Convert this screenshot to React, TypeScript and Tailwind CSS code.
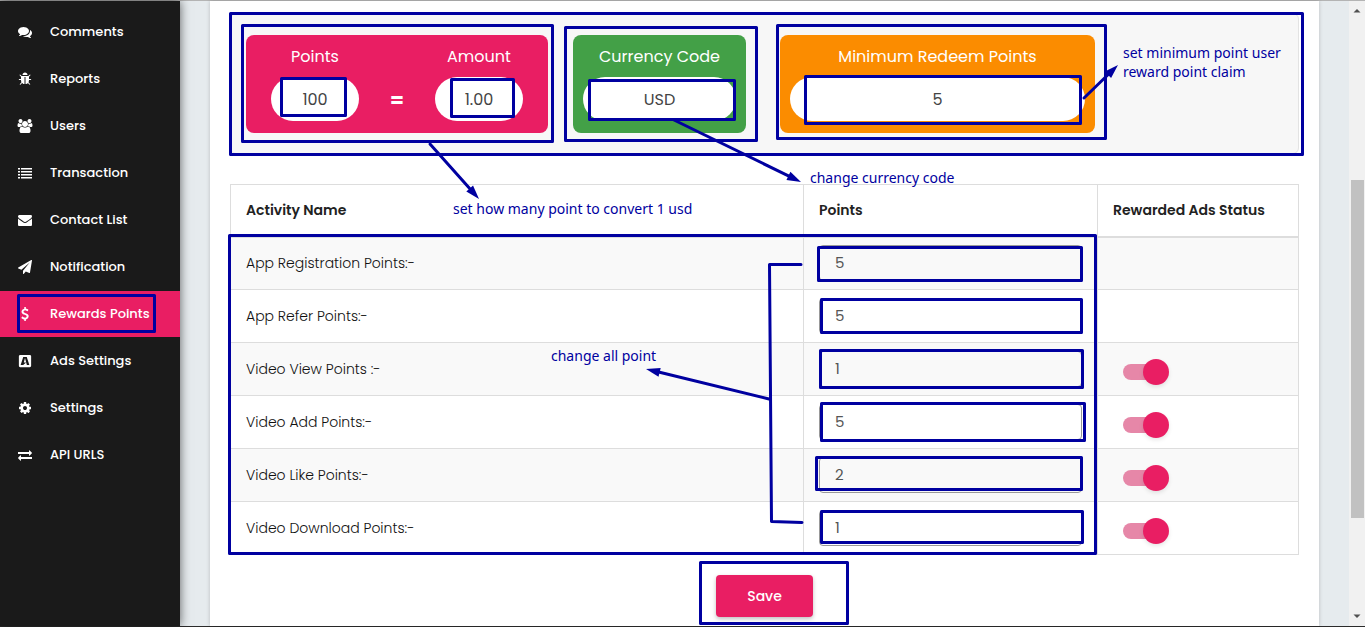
import type { ReactNode } from "react";
import { FaBuysellads } from "react-icons/fa";

const icons = {
  comments:
    "M1408 768q0 139-94 257t-256.5 186.5-353.5 68.5q-86 0-176-16-124 88-278 128-36 9-86 16h-3q-11 0-20.5-8t-11.5-21q-1-3-1-6.5t.5-6.5 2-6l2.5-5 3.5-5.5 4-5 4.5-5 4-4.5q5-6 23-25t26-29.5 22.5-29 25-38.5 20.5-44q-124-72-195-177t-71-224q0-139 94-257t256.5-186.5 353.5-68.5 353.5 68.5 256.5 186.5 94 257zm384 256q0 120-71 224.5t-195 176.5q10 24 20.5 44t25 38.5 22.5 29 26 29.5 23 25q1 1 4 4.5t4.5 5 4 5 3.5 5.5l2.5 5 2 6 .5 6.5-1 6.5q-3 14-13 22t-22 7q-50-7-86-16-154-40-278-128-90 16-176 16-271 0-472-132 58 4 88 4 161 0 309-45t264-129q125-92 192-212t67-254q0-77-23-152 129 71 204 178t75 230z",
  bug: "M1696 960q0 26-19 45t-45 19h-224q0 171-67 290l208 209q19 19 19 45t-19 45q-18 19-45 19t-45-19l-198-197q-5 5-15 13t-42 28.5-65 36.5-82 29-97 13v-896h-128v896q-51 0-101.5-13.5t-87-33-66-39-43.5-32.5l-15-14-183 207q-20 21-48 21-24 0-43-16-19-18-20.5-44.5t15.5-46.5l202-227q-58-114-58-274h-224q-26 0-45-19t-19-45 19-45 45-19h224v-294l-173-173q-19-19-19-45t19-45 45-19 45 19l173 173h844l173-173q19-19 45-19t45 19 19 45-19 45l-173 173v294h224q26 0 45 19t19 45zm-480-576h-640q0-133 93.5-226.5t226.5-93.5 226.5 93.5 93.5 226.5z",
  users:
    "M657 896q-162 5-265 128h-134q-82 0-138-40.5t-56-118.5q0-353 124-353 6 0 43.5 21t97.5 42.5 119 21.5q67 0 133-23-5 37-5 66 0 139 81 256zm1071 637q0 120-73 189.5t-194 69.5h-874q-121 0-194-69.5t-73-189.5q0-53 3.5-103.5t14-109 26.5-108.5 43-97.5 62-81 85.5-53.5 111.5-20q10 0 43 21.5t73 48 107 48 135 21.5 135-21.5 107-48 73-48 43-21.5q61 0 111.5 20t85.5 53.5 62 81 43 97.5 26.5 108.5 14 109 3.5 103.5zm-1024-1277q0 106-75 181t-181 75-181-75-75-181 75-181 181-75 181 75 75 181zm704 384q0 159-112.5 271.5t-271.5 112.5-271.5-112.5-112.5-271.5 112.5-271.5 271.5-112.5 271.5 112.5 112.5 271.5zm576 225q0 78-56 118.5t-138 40.5h-134q-103-123-265-128 81-117 81-256 0-29-5-66 66 23 133 23 59 0 119-21.5t97.5-42.5 43.5-21q124 0 124 353zm-128-609q0 106-75 181t-181 75-181-75-75-181 75-181 181-75 181 75 75 181z",
  list: "M0 256h256v192h-256zM384 256h1408v192h-1408zM0 640h256v192h-256zM384 640h1408v192h-1408zM0 1024h256v192h-256zM384 1024h1408v192h-1408zM0 1408h256v192h-256zM384 1408h1408v192h-1408z",
  envelope:
    "M1792 710v794q0 66-47 113t-113 47h-1472q-66 0-113-47t-47-113v-794q44 49 101 87 362 246 497 345 57 42 92.5 65.5t94.5 48 110 24.5h2q51 0 110-24.5t94.5-48 92.5-65.5q170-123 498-345 57-39 100-87zm0-294q0 79-49 151t-122 123q-376 261-468 325-10 7-42.5 31t-54 38.5-52 32.5-57.5 27-50 9h-2q-23 0-50-9t-57.5-27-52-32.5-54-38.5-42.5-31q-91-64-262-182.5t-205-142.5q-62-42-117-115.5t-55-136.5q0-78 41.5-130t118.5-52h1472q65 0 112.5 47t47.5 113z",
  plane:
    "M1764 11q33 24 27 64l-256 1536q-5 29-32 45-14 8-31 8-11 0-24-5l-453-185-242 295q-18 23-49 23-13 0-22-4-19-7-30.5-23.5t-11.5-36.5v-349l864-1059-1069 925-395-162q-37-14-40-55-2-40 32-59l1664-960q15-9 32-9 20 0 36 11z",
  dollar:
    "M1362 1185q0 153-99.5 263.5t-258.5 136.5v175q0 14-9 23t-23 9h-135q-13 0-22.5-9.5t-9.5-22.5v-175q-66-9-127.5-31t-101.5-44.5-74-48-46.5-37.5-17.5-18q-17-21-2-41l103-135q7-10 23-12 15-2 24 9l2 2q113 99 243 125 37 8 74 8 81 0 142.5-43t61.5-122q0-28-15-53t-33.5-42-58.5-37.5-66-32-80-32.5q-39-16-61.5-25t-61.5-26.5-62.5-31-56.5-35.5-53.5-42.5-43.5-49-35.5-58-21-66.5-8.5-78q0-138 98-242t255-134v-180q0-13 9.5-22.5t22.5-9.5h135q14 0 23 9t9 23v176q57 6 110.5 23t87 33.5 63.5 37.5 39 29 15 14q17 18 5 38l-81 146q-8 15-23 16-14 3-27-7-3-3-14.5-12t-39-26.5-58.5-32-74.5-26-85.5-11.5q-95 0-155 43t-60 111q0 26 8.5 48t29.5 41.5 39.5 33 56 31 60.5 27 70 27.5q53 20 81 31.5t76 35 75.5 42.5 62 50 53 63.5 31.5 76.5 13 94z",
  cog: "M1152 896q0-106-75-181t-181-75-181 75-75 181 75 181 181 75 181-75 75-181zm512-109v222q0 12-8 23t-20 13l-185 28q-19 54-39 91 35 50 107 138 10 12 10 25t-9 23q-27 37-99 108t-94 71q-12 0-26-9l-138-108q-44 23-91 38-16 136-29 186-7 28-36 28h-222q-14 0-24.5-8.5t-11.5-21.5l-28-184q-49-16-90-37l-141 107q-10 9-25 9-14 0-25-11-126-114-165-168-7-10-7-23 0-12 8-23 15-21 51-66.5t54-70.5q-27-50-41-99l-183-27q-13-2-21-12.5t-8-23.5v-222q0-12 8-23t19-13l186-28q14-46 39-92-40-57-107-138-10-12-10-24 0-10 9-23 26-36 98.5-107.5t94.5-71.5q13 0 26 10l138 107q44-23 91-38 16-136 29-186 7-28 36-28h222q14 0 24.5 8.5t11.5 21.5l28 184q49 16 90 37l142-107q9-9 24-9 13 0 25 10 129 119 165 170 7 8 7 22 0 12-8 23-15 21-51 66.5t-54 70.5q26 50 41 98l183 28q13 2 21 12.5t8 23.5z",
  exchange:
    "M1792 1184v192q0 13-9.5 22.5t-22.5 9.5h-1376v192q0 13-9.5 22.5t-22.5 9.5q-12 0-24-10l-319-320q-9-9-9-22 0-14 9-23l320-320q9-9 23-9 13 0 22.5 9.5t9.5 22.5v192h1376q13 0 22.5 9.5t9.5 22.5zm0-544q0 14-9 23l-320 320q-9 9-23 9-13 0-22.5-9.5t-9.5-22.5v-192h-1376q-13 0-22.5-9.5t-9.5-22.5v-192q0-13 9.5-22.5t22.5-9.5h1376v-192q0-14 9-23t23-9q12 0 24 10l319 319q9 9 9 23z",
};

function Icon({ d, wide }: { d: string; wide?: boolean }) {
  return (
    <svg
      viewBox={wide ? "0 0 2048 1792" : "0 0 1792 1792"}
      className={wide ? "h-[14px] w-4 fill-current" : "size-[14px] fill-current"}
      aria-hidden="true"
    >
      <path d={d} />
    </svg>
  );
}

const navItems: { label: string; icon: ReactNode; active?: boolean }[] = [
  { label: "Comments", icon: <Icon d={icons.comments} /> },
  { label: "Reports", icon: <Icon d={icons.bug} /> },
  { label: "Users", icon: <Icon d={icons.users} wide /> },
  { label: "Transaction", icon: <Icon d={icons.list} /> },
  { label: "Contact List", icon: <Icon d={icons.envelope} /> },
  { label: "Notification", icon: <Icon d={icons.plane} /> },
  { label: "Rewards Points", icon: <Icon d={icons.dollar} />, active: true },
  { label: "Ads Settings", icon: <FaBuysellads className="size-[14px]" /> },
  { label: "Settings", icon: <Icon d={icons.cog} /> },
  { label: "API URLS", icon: <Icon d={icons.exchange} /> },
];

const activities = [
  { name: "App Registration Points:-", points: "5", ads: false },
  { name: "App Refer Points:-", points: "5", ads: false },
  { name: "Video View Points :-", points: "1", ads: true },
  { name: "Video Add Points:-", points: "5", ads: true },
  { name: "Video Like Points:-", points: "2", ads: true },
  { name: "Video Download Points:-", points: "1", ads: true },
];

function Field({ label, value }: { label: string; value: string }) {
  return (
    <label className="flex w-full flex-col gap-2 text-center text-base leading-6 text-white">
      {label}
      <input
        defaultValue={value}
        className="h-11 w-full rounded-full bg-white text-center text-base text-[#444]"
      />
    </label>
  );
}

/* Outer edges of each marker box: left, top, right, bottom. */
const boxes = [
  [17, 294, 156, 333],
  [229, 12, 1304, 156],
  [241, 24, 554, 143],
  [280, 77, 347, 117],
  [450, 78, 515, 118],
  [564, 26, 758, 142],
  [588, 79, 736, 121],
  [776, 24, 1107, 140],
  [804, 75, 1082, 125],
  [228, 234, 1097, 555],
  [817, 246, 1083, 282],
  [820, 298, 1083, 334],
  [819, 349, 1084, 389],
  [820, 402, 1086, 442],
  [815, 456, 1083, 491],
  [820, 510, 1084, 544],
  [699, 561, 849, 625],
];

const arrows = [
  [430, 144, 479, 199],
  [674, 120, 801, 182],
  [1084, 98, 1118, 65],
  [769, 399, 646, 369],
];

function Annotations() {
  return (
    <div className="pointer-events-none absolute inset-0 z-20 overflow-hidden font-['Noto_Sans',sans-serif] text-sm leading-[19px] text-[#0000a0]">
      <svg className="absolute inset-0 size-full" fill="none" stroke="#0000a0" strokeWidth="3" aria-hidden="true">
        {boxes.map(([l, t, r, b]) => (
          <rect key={`${l}-${t}`} x={l + 1.5} y={t + 1.5} width={r - l - 3} height={b - t - 3} strokeLinejoin="round" />
        ))}
        {arrows.map(([x1, y1, x2, y2]) => {
          const len = Math.hypot(x2 - x1, y2 - y1);
          const ux = (x2 - x1) / len;
          const uy = (y2 - y1) / len;
          const bx = x2 - ux * 14;
          const by = y2 - uy * 14;
          return (
            <g key={x1}>
              <path d={`M${x1} ${y1}L${bx} ${by}`} strokeLinecap="round" />
              <path
                d={`M${x2} ${y2}L${bx - uy * 4.5} ${by + ux * 4.5}L${bx + uy * 4.5} ${by - ux * 4.5}Z`}
                fill="#0000a0"
                stroke="none"
              />
            </g>
          );
        })}
        <path d="M801 264.500H769.500L771.500 521.500L802 522.500" strokeLinecap="round" strokeLinejoin="round" />
      </svg>
      <p className="absolute top-[43px] left-[1123px] w-44">set minimum point user reward point claim</p>
      <p className="absolute top-[168px] left-[810px]">change currency code</p>
      <p className="absolute top-[199px] left-[453px]">set how many point to convert 1 usd</p>
      <p className="absolute top-[346px] left-[551px]">change all point</p>
    </div>
  );
}

export default function App() {
  return (
    <div className="relative font-['Poppins','Inter',sans-serif] text-sm">
      <div className="flex min-h-screen border-t border-b border-t-[#b4b4b4] border-b-[#2b2b2b] bg-[#e6ebee]">
        <nav className="z-10 w-[180px] shrink-0 bg-[#1a1a1a] pt-2 text-[13px] font-medium shadow-[0_0_10px_rgba(0,0,0,0.6)]">
          <ul className="flex flex-col gap-px">
            {navItems.map((item) => (
              <li key={item.label}>
                <a
                  href="#"
                  className={
                    item.active
                      ? "flex h-[46px] items-center gap-4 bg-[#e91e63] pl-4 text-white"
                      : "flex h-[46px] items-center gap-4 pl-4 text-white"
                  }
                >
                  <span className="flex w-[18px] justify-center">{item.icon}</span>
                  {item.label}
                </a>
              </li>
            ))}
          </ul>
        </nav>

        <main className="flex min-w-0 flex-1 px-[30px]">
          <form
            className="flex min-w-0 flex-1 flex-col bg-white px-5 pt-3 shadow-[0_0_4px_rgba(0,0,0,0.2)]"
            onSubmit={(e) => e.preventDefault()}
          >
            <section className="flex items-start rounded-md border border-[#e3e3e3] bg-[#f7f7f7] px-[15px] pt-[21px] pb-5">
              <div className="flex h-[98px] w-[302px] justify-between rounded-lg bg-[#e91e63] px-[25px] pt-2.5">
                <div className="w-[88px]">
                  <Field label="Points" value="100" />
                </div>
                <span className="pt-10 text-xl leading-[30px] font-bold text-white">=</span>
                <div className="w-[88px]">
                  <Field label="Amount" value="1.00" />
                </div>
              </div>
              <div className="ml-[25px] h-[98px] w-[173px] rounded-lg bg-[#43a047] px-2.5 pt-2.5">
                <Field label="Currency Code" value="USD" />
              </div>
              <div className="ml-[34px] h-[98px] w-[315px] rounded-lg bg-[#fb8c00] px-2.5 pt-2.5">
                <Field label="Minimum Redeem Points" value="5" />
              </div>
            </section>

            <table className="mt-[30px] w-full table-fixed border-collapse border border-[#ddd] text-left">
              <thead>
                <tr className="h-[52px] border-b-2 border-[#ddd] text-[#222]">
                  <th className="border-r border-[#ddd] px-[15px] font-semibold">Activity Name</th>
                  <th className="w-[294px] border-r border-[#ddd] px-[15px] font-semibold">Points</th>
                  <th className="w-[201px] px-[15px] font-semibold">Rewarded Ads Status</th>
                </tr>
              </thead>
              <tbody>
                {activities.map((row, i) => (
                  <tr key={row.name} className="h-[53px] border-b border-[#ddd] odd:bg-[#f9f9f9]">
                    <td className="border-r border-[#ddd] px-[15px] font-light text-[#111]">
                      <label htmlFor={`points-${i}`}>{row.name}</label>
                    </td>
                    <td className="border-r border-[#ddd] px-[15px]">
                      <input
                        id={`points-${i}`}
                        defaultValue={row.points}
                        className="block h-9 w-full rounded-sm border border-[#999] bg-transparent px-[15px] pb-0.5 text-[15px] text-[#555]"
                      />
                    </td>
                    <td className="px-[15px]">
                      {row.ads && (
                        <input
                          type="checkbox"
                          role="switch"
                          defaultChecked
                          aria-label={`${row.name} rewarded ads`}
                          className="relative mt-1.5 ml-2.5 block h-4 w-10 appearance-none rounded-full bg-[#e687a8] before:absolute before:-top-[5px] before:left-5 before:size-[26px] before:rounded-full before:bg-[#e91e63] before:shadow-[0_2px_4px_rgba(0,0,0,0.1)]"
                        />
                      )}
                    </td>
                  </tr>
                ))}
              </tbody>
            </table>

            <button
              type="submit"
              className="mt-5 h-[42px] self-center rounded bg-[#e91e63] px-[31px] text-sm font-medium text-white shadow-[0_2px_4px_rgba(0,0,0,0.25)]"
            >
              Save
            </button>
          </form>
        </main>

        <div className="flex w-4 shrink-0 flex-col items-center bg-[#f1f1f1]" aria-hidden="true">
          <svg viewBox="0 0 16 16" className="my-0.5 size-4 fill-[#505050]">
            <path d="M4.500 9.500h7L8 6z" />
          </svg>
          <div className="mt-[159px] h-[338px] w-[13px] bg-[#c1c1c1]" />
          <svg viewBox="0 0 16 16" className="mt-auto mb-0.5 size-4 fill-[#505050]">
            <path d="M4.500 6.500h7L8 10z" />
          </svg>
        </div>
      </div>

      <Annotations />
    </div>
  );
}
